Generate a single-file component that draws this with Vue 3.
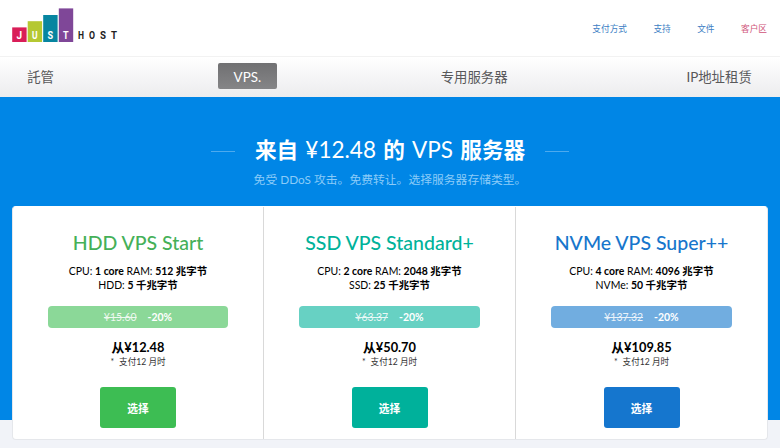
<template>
  <div class="page">
    <header class="header">
      <svg class="logo" width="108" height="36" viewBox="0 0 108 36">
        <g v-for="bar in bars" :key="bar.letter">
          <rect :x="bar.x" :y="34 - bar.height" width="14.4" :height="bar.height" :fill="bar.color" />
          <text class="letter" :x="bar.x + 7" y="30.5" textLength="5.6" lengthAdjust="spacingAndGlyphs" fill="#fff">{{ bar.letter }}</text>
        </g>
        <text
          v-for="(char, index) in 'HOST'"
          :key="char"
          class="letter"
          :x="69 + index * 11"
          y="30.5"
          textLength="6"
          lengthAdjust="spacingAndGlyphs"
          fill="#222"
        >{{ char }}</text>
      </svg>
      <div class="links">
        <a v-for="link in links" :key="link" :class="{ client: link === '客户区' }">{{ link }}</a>
      </div>
    </header>

    <nav class="nav">
      <a v-for="item in menu" :key="item" :class="{ active: item === 'VPS.' }">{{ item }}</a>
    </nav>

    <section class="hero">
      <div class="heading">
        <i class="line"></i>
        <h1><b>来自</b> ¥12.48 <b>的</b> VPS <b>服务器</b></h1>
        <i class="line"></i>
      </div>
      <p class="subtitle">免受 DDoS 攻击。免费转让。选择服务器存储类型。</p>

      <div class="plans">
        <div v-for="plan in plans" :key="plan.type" class="plan" :class="plan.type">
          <h2>{{ plan.name }}</h2>
          <p class="specs">
            CPU: <b>{{ plan.cores }} core</b> RAM: <b>{{ plan.ram }} 兆字节</b><br />
            {{ plan.disk }}: <b>{{ plan.size }} 千兆字节</b>
          </p>
          <div class="discount"><s>¥{{ plan.old }}</s><b>-20%</b></div>
          <div class="price">从¥{{ plan.price }}</div>
          <div class="note"><span>*</span>支付12 月时</div>
          <button>选择</button>
        </div>
      </div>
    </section>
  </div>
</template>

<script setup>
const bars = [
  { letter: 'J', x: 0.2, height: 14.6, color: '#d91e58' },
  { letter: 'U', x: 15.7, height: 20.8, color: '#b5c832' },
  { letter: 'S', x: 31.2, height: 27, color: '#0785a0' },
  { letter: 'T', x: 46.8, height: 33.6, color: '#7f4798' },
]

const links = ['支付方式', '支持', '文件', '客户区']
const menu = ['託管', 'VPS.', '专用服务器', 'IP地址租赁']

const plans = [
  { type: 'hdd', name: 'HDD VPS Start', cores: 1, ram: 512, disk: 'HDD', size: 5, old: '15.60', price: '12.48' },
  { type: 'ssd', name: 'SSD VPS Standard+', cores: 2, ram: 2048, disk: 'SSD', size: 25, old: '63.37', price: '50.70' },
  { type: 'nvme', name: 'NVMe VPS Super++', cores: 4, ram: 4096, disk: 'NVMe', size: 50, old: '137.32', price: '109.85' },
]
</script>

<style>
body {
  background: #f1f3f8;
}
</style>

<style scoped>
.page {
  height: 448px;
  overflow: hidden;
  font-family: Lato, "Noto Sans CJK SC", sans-serif;
  color: #000;
}

h1, h2, p {
  margin: 0;
}

.header {
  display: flex;
  justify-content: space-between;
  box-sizing: border-box;
  height: 56px;
  padding: 8px 13px 0 12px;
  background: #fff;
}

.letter {
  font: bold 11px Roboto, sans-serif;
  text-anchor: middle;
}

.links {
  display: flex;
  gap: 26.4px;
  padding-top: 13px;
  font-size: 8.7px;
  line-height: 16px;
  color: #3c80c4;
}

.client {
  color: #cf5277;
}

.nav {
  display: flex;
  align-items: center;
  justify-content: space-between;
  box-sizing: border-box;
  height: 41px;
  padding: 0 13px 2px 12px;
  border-top: 1px solid #f2f2f2;
  background: linear-gradient(#fff, #ececee);
  font-size: 13.4px;
  line-height: 24px;
  color: #58585a;
}

.nav a {
  padding: 2px 15.2px 0;
}

.nav .active {
  padding: 2px 16px 0;
  border-radius: 2px;
  background: linear-gradient(#707072, #858587);
  color: #fff;
}

.hero {
  box-sizing: border-box;
  height: 323px;
  padding: 36px 12px 0;
  background: #0086e6;
  text-align: center;
}

.heading {
  display: flex;
  align-items: center;
  justify-content: center;
  gap: 20px;
  height: 34px;
}

.heading h1 {
  font-size: 22.5px;
  font-weight: 400;
  line-height: 34px;
  word-spacing: 1.5px;
  color: #fff;
}

.heading b {
  font-size: 21.6px;
}

.line {
  width: 24px;
  height: 1px;
  margin-top: 2px;
  background: #4daaee;
}

.subtitle {
  padding-top: 3px;
  font-size: 11.8px;
  line-height: 20px;
  color: #8bcbf8;
}

.plans {
  display: grid;
  grid-template-columns: 250px 252px 1fr;
  box-sizing: border-box;
  height: 234px;
  margin-top: 16px;
  border: 1px solid #e5e7eb;
  border-top-color: #fff;
  border-radius: 4px;
  background: #fff;
}

.plan {
  padding: 23px 35px 0;
}

.plan + .plan {
  border-left: 1px solid #d9d9d9;
}

.plan h2 {
  font-size: 19.5px;
  font-weight: 500;
  line-height: 26px;
  white-space: nowrap;
}

.specs {
  margin-top: 8px;
  font-size: 10.45px;
  line-height: 14px;
  white-space: nowrap;
}

.discount {
  display: flex;
  align-items: center;
  justify-content: center;
  gap: 11px;
  height: 22px;
  margin-top: 14px;
  border-radius: 4px;
  font-size: 10.45px;
  line-height: 22px;
  color: #fff;
}

.discount s {
  opacity: 0.85;
}

.price {
  margin-top: 10px;
  font-size: 12.8px;
  font-weight: 700;
  line-height: 18px;
}

.note {
  margin-top: 1px;
  font-size: 8.6px;
  line-height: 10px;
  color: #333;
}

.note span {
  margin-right: 5px;
}

button {
  width: 76px;
  height: 41px;
  margin-top: 20px;
  padding: 0;
  border: 0;
  border-radius: 3px;
  font: bold 10.8px Lato, "Noto Sans CJK SC", sans-serif;
  color: #fff;
}

.hdd h2 { color: #45b058; }
.hdd .discount { background: #8bd898; }
.hdd button { background: #3dbd53; }

.ssd h2 { color: #00b29a; }
.ssd .discount { background: #67d1c3; }
.ssd button { background: #00b19b; }

.nvme h2 { color: #1776cc; }
.nvme .discount { background: #71ade0; }
.nvme button { background: #1576ce; }
</style>
